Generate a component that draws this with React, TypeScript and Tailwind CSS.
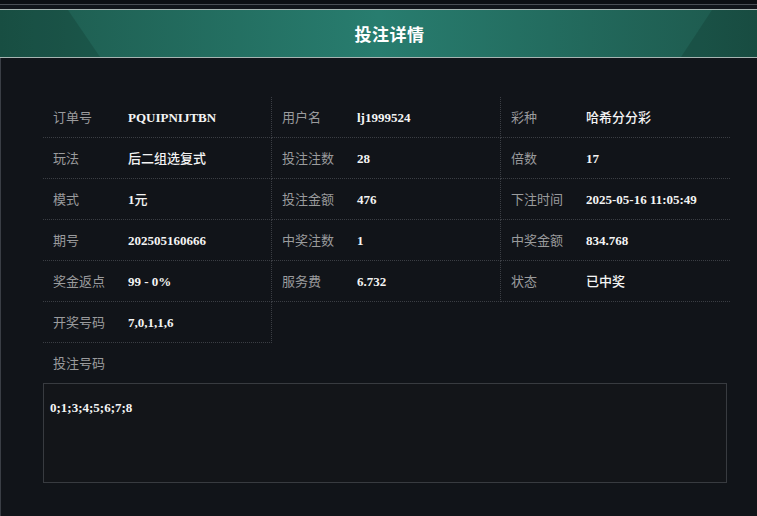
const rows: [string, string][][] = [
  [
    ["订单号", "PQUIPNIJTBN"],
    ["用户名", "lj1999524"],
    ["彩种", "哈希分分彩"],
  ],
  [
    ["玩法", "后二组选复式"],
    ["投注注数", "28"],
    ["倍数", "17"],
  ],
  [
    ["模式", "1元"],
    ["投注金额", "476"],
    ["下注时间", "2025-05-16 11:05:49"],
  ],
  [
    ["期号", "202505160666"],
    ["中奖注数", "1"],
    ["中奖金额", "834.768"],
  ],
  [
    ["奖金返点", "99 - 0%"],
    ["服务费", "6.732"],
    ["状态", "已中奖"],
  ],
  [["开奖号码", "7,0,1,1,6"]],
];

// chinese parts of a value render lighter than the latin serif parts
function Value({ text }: { text: string }) {
  const parts = text.match(/[\u4e00-\u9fff]+|[^\u4e00-\u9fff]+/g) || [];
  return (
    <span className="text-[13px] text-[#f4f4f4]">
      {parts.map((p, i) =>
        /[\u4e00-\u9fff]/.test(p) ? (
          <span key={i} className="font-medium font-['Noto_Sans_CJK_SC',sans-serif]">
            {p}
          </span>
        ) : (
          <span key={i} className="font-bold font-['Liberation_Serif',serif]">
            {p}
          </span>
        )
      )}
    </span>
  );
}

function Cell({ label, value, last }: { label: string; value: string; last: boolean }) {
  return (
    <div
      className={
        "flex h-[41px] items-center border-b border-dotted border-[#3b3e44] pl-[10px] " +
        (last ? "" : "border-r")
      }
    >
      <span className="w-[75px] shrink-0 text-[13px] text-[#9a9b9d]">{label}</span>
      <Value text={value} />
    </div>
  );
}

export default function App() {
  return (
    <div className="h-[516px] w-[757px] overflow-hidden bg-[#111419] font-['Noto_Sans_CJK_SC','Noto_Sans',sans-serif]">
      {/* top strip */}
      <div className="h-[4px] bg-[#0c0f14]" />
      <div className="h-px bg-[#4a4f56]" />
      <div className="h-[4px] bg-[#11151b]" />

      {/* header */}
      <div className="relative flex h-[49px] items-center justify-center border-y border-[#a7b4b2] bg-linear-to-r from-[#1d5a4d] via-[#287d6f] to-[#1d584c]">
        <svg className="absolute inset-0 h-full w-full" viewBox="0 0 757 47" preserveAspectRatio="none">
          <polygon points="0,0 68,0 100,47 0,47" fill="rgba(0,20,15,0.16)" />
          <polygon points="712,0 757,0 757,47 681,47" fill="rgba(0,20,15,0.16)" />
        </svg>
        <span className="relative ml-[22px] text-[17px] font-bold tracking-[0.5px] text-white">
          投注详情
        </span>
      </div>

      {/* body */}
      <div className="h-[458px] border-l border-[#3a3e45] pt-[39px]">
        <div className="ml-[42px] grid w-[687px] grid-cols-3">
          {rows.map((row, ri) =>
            row.map(([label, value], ci) => (
              <Cell key={ri + "-" + ci} label={label} value={value} last={ci === 2} />
            ))
          )}
        </div>

        <div className="ml-[42px] flex h-[40px] items-center pl-[10px] text-[13px] text-[#9a9b9d]">
          投注号码
        </div>

        <div className="ml-[42px] h-[100px] w-[684px] border border-[#383b40] bg-[#131519] px-[6px] pt-[9px]">
          <span className="text-[13px] font-bold text-[#f4f4f4] font-['Liberation_Serif',serif]">
            0;1;3;4;5;6;7;8
          </span>
        </div>
      </div>
    </div>
  );
}
